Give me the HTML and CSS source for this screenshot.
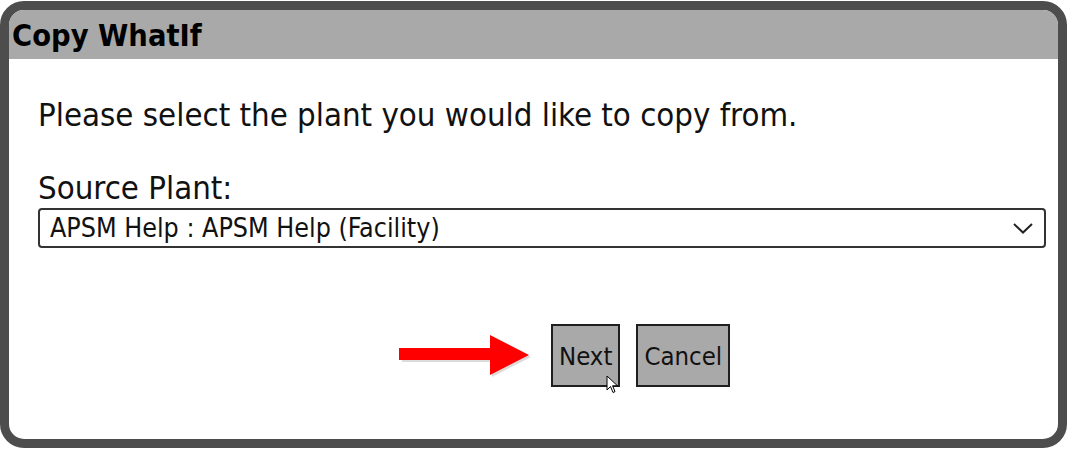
FILE: index.html
```html
<!DOCTYPE html>
<html>
<head>
    <title>Copy WhatIf</title>
    <link rel="stylesheet" href="styles.css">
</head>
<body>
    <div class="dialog">
        <div class="dialog-title">Copy WhatIf</div>

        <div class="dialog-body">
            <p class="prompt">Please select the plant you would like to copy from.</p>

            <label class="field-label">Source Plant:</label>
            <div class="select-box">
                <span class="select-text">APSM Help : APSM Help (Facility)</span>
                <svg class="chevron" width="20" height="11" viewBox="0 0 20 11">
                    <polyline points="1,1 10,9.5 19,1" fill="none" stroke="#222" stroke-width="2"/>
                </svg>
            </div>

            <div class="actions">
                <!-- annotation arrow pointing at Next -->
                <svg class="pointer-arrow" width="132" height="44" viewBox="0 0 132 44">
                    <polygon points="3,16 93,16 93,3 132,23 93,43 93,28 3,28" fill="#999" opacity="0.35"/>
                    <polygon points="0,14 91,14 91,1 130,21 91,41 91,26 0,26" fill="#ff0000"/>
                </svg>
                <button class="btn btn-next">Next
                    <svg class="cursor" width="13" height="20" viewBox="0 0 13 20">
                        <path d="M1,1 L1,15 L4.5,11.5 L7,17.5 L9,16.6 L6.6,10.8 L11.5,10.8 Z" fill="#fff" stroke="#000" stroke-width="1"/>
                    </svg>
                </button>
                <button class="btn">Cancel</button>
            </div>
        </div>
    </div>
</body>
</html>
```

FILE: styles.css
```css
body {
    margin: 0;
    padding: 0;
    background-color: white;
    font-family: "DejaVu Sans Condensed", "DejaVu Sans", Verdana, sans-serif;
    font-stretch: semi-condensed;
    color: #111;
}

.dialog {
    width: 1067px;
    height: 447px;
    margin-top: 1px;
    box-sizing: border-box;
    border: 9px solid #4d4d4d;
    border-radius: 24px;
    background-color: white;
    overflow: hidden;
}

.dialog-title {
    height: 49px;
    box-sizing: border-box;
    padding: 2px 0 0 3px;
    line-height: 47px;
    font-size: 30.5px;
    font-weight: bold;
    background-color: #a9a9a9;
    color: #000;
}

.dialog-body {
    padding: 38px 12px 0 29px;
}

.prompt {
    margin: 0 0 37px 0;
    font-size: 32.7px;
    line-height: 36px;
}

.field-label {
    display: block;
    font-size: 32.7px;
    line-height: 36px;
    margin-bottom: 2px;
}

.select-box {
    display: flex;
    align-items: center;
    justify-content: space-between;
    height: 40px;
    box-sizing: border-box;
    padding: 0 11px 1px 10px;
    border: 2px solid #333;
    border-radius: 4px;
    font-size: 26.6px;
}

.chevron {
    margin-top: 2px;
}

.actions {
    display: flex;
    align-items: center;
    margin-top: 76px;
    padding-left: 361px;
}

.pointer-arrow {
    margin-right: 20px;
}

.btn {
    position: relative;
    height: 63px;
    padding: 0 6px;
    margin-right: 16px;
    border: 2px solid #1f1f1f;
    background-color: #a9a9a9;
    font-family: "DejaVu Sans Condensed", "DejaVu Sans", Verdana, sans-serif;
    font-stretch: semi-condensed;
    font-size: 25.5px;
    color: #111;
}

.cursor {
    position: absolute;
    left: 53px;
    top: 49px;
}
```
